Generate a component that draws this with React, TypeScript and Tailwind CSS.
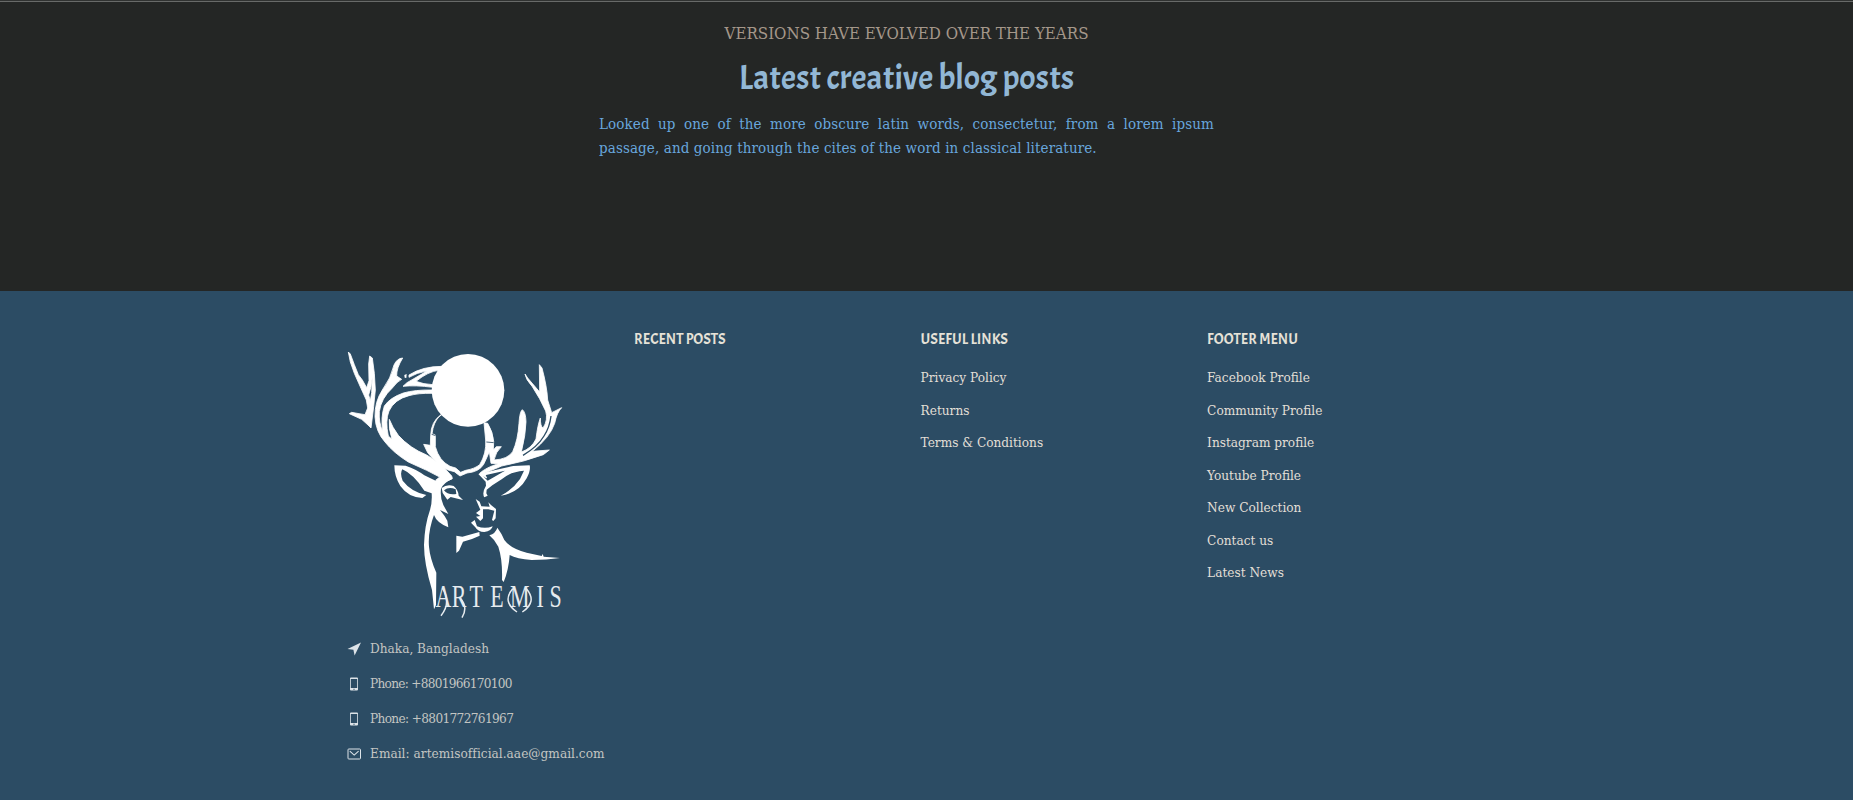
import type { ReactNode } from "react";

const usefulLinks = ["Privacy Policy", "Returns", "Terms & Conditions"];

const footerMenu = [
  "Facebook Profile",
  "Community Profile",
  "Instagram profile",
  "Youtube Profile",
  "New Collection",
  "Contact us",
  "Latest News",
];

function ArtemisLogo() {
  return (
    <svg viewBox="36 30 648 810" className="block h-[270px] w-[216px] overflow-visible" fill="white" role="img" aria-label="Artemis">
      <circle cx="399" cy="151" r="109" />
      <g stroke="white" strokeWidth="2.5" strokeLinejoin="round">
        {/* outer left antler */}
        <path
          fillRule="evenodd"
          d="M40 36 L46 42 L58 74 L70 104 L82 120 L95 143 L102 122 L101 72 L104 48 L112 54 L118 100 L121 150 L116 200 L111 240 L108 264 L99 255 L80 238 L43 221 L50 217 L72 221 L90 224 L98 204 L94 180 L78 145 L58 100 L46 66Z M101 165 L106 182 L110 158 L112 110 L108 140Z"
        />
        {/* main left beam */}
        <path d="M203 54 Q186 55 177 75 Q168 115 142 150 Q119 185 120 230 Q122 275 150 306 Q175 338 220 366 L275 391 L314 411 L302 421 L316 432 L352 416 L350 408 Q318 370 275 345 Q225 325 190 286 Q172 262 163 238 Q160 265 171 298 L160 288 Q150 242 162 213 Q178 178 222 167 Q250 159 291 160 L291 150 Q240 149 205 159 Q165 173 148 198 Q137 232 143 274 Q131 248 133 215 Q138 175 172 144 Q187 124 200 118 L185 108 Q184 85 203 54Z" />
        <path d="M208 105 L215 102 L214 114 L209 113Z" stroke="none" />
        <path d="M222 105 Q262 79 322 79 L312 91 Q280 94 243 124 Q265 133 294 134 L294 142 Q240 135 204 139 L216 128 L276 93 Q245 98 222 112Z" />
        {/* inner tines and the right antler */}
        <path d="M320 224 Q302 235 294 265 L291 281 L301 285 L301 320 Q312 362 345 379 L362 384 L377 397 L392 391 Q420 386 434 374 Q455 340 452 300 L447 248 L458 250 Q474 276 476 304 L475 330 L484 320 L499 320 Q482 336 477 360 Q518 358 533 335 Q549 300 552 250 Q554 215 562 209 Q572 216 573 245 Q572 285 559 336 Q590 325 603 297 Q608 255 616 234 Q616 260 624 264 Q640 240 632 213 Q615 175 592 140 Q572 118 570 102 L578 114 L614 156 L613 74 L621 84 Q636 140 638 180 L650 218 L680 203 Q666 216 659 250 Q645 292 592 334 L643 330 L625 344 Q565 366 500 378 L448 400 L455 414 L438 405 L434 400 Q452 383 490 371 L468 370 L463 335 Q456 352 446 373 Q432 396 396 399 L375 408 L358 395 Q322 388 306 368 L292 354 L278 338 L266 313 L286 316 L287 286 Q288 245 318 224Z" />
      </g>
      <path d="M454 306 L476 308 M290 283 L302 287" stroke="#2c4c64" strokeWidth="2.5" />
      <path d="M564 346 Q608 320 627 288 Q644 262 648 228" stroke="#2c4c64" strokeWidth="4" fill="none" />
      <g transform="translate(150 330)">
        {/* left ear, temple and cheek */}
        <path d="M28 46 L62 47 Q95 58 118 76 L152 92 L202 82 L200 88 Q177 98 168 116 Q165 145 175 165 L190 192 L165 180 Q180 198 187 212 L190 232 Q155 218 147 195 L134 183 Q142 160 140 130 L118 122 Q85 72 52 58 Q44 70 53 92 Q78 125 124 135 L112 144 Q70 142 46 108 Q28 80 28 46Z M134 183 L148 192 Q128 245 132 290 Q135 325 154 368 L153 465 L147 478 L141 420 Q117 340 117 285 Q119 225 134 183Z" />
        {/* eye */}
        <path fillRule="evenodd" d="M170 114 Q185 102 206 108 Q220 120 221 137 L234 150 L212 145 L197 141 L187 149 L173 129Z M177 121 Q188 136 214 132 L212 118 Q192 108 177 121Z" />
        {/* right ear */}
        <path
          fillRule="evenodd"
          d="M280 72 Q320 62 385 48 L434 46 Q438 60 425 85 Q400 130 347 137 Q384 118 405 87 L417 62 Q375 65 350 88 L322 106 L305 119 L304 130 L308 137 L298 142 Q290 128 303 107 L302 95Z M293 77 L308 92 L360 62Z"
        />
        {/* muzzle */}
        <path d="M272 147 L284 155 L289 169 L314 170 L310 157 L318 165 L333 177 L332 205 L325 213 L321 210 L328 182 L310 178 L294 178 L294 205 L286 213 L273 200 L286 198 L273 189 L286 179Z" />
        <path d="M258 218 L269 210 L276 229 Q300 238 323 229 Q320 243 298 246 Q279 246 271 232Z" />
        <path d="M214 257 L232 260 Q262 252 283 246 L284 257 Q262 268 234 275 L222 302 L214 309Z" />
      </g>
      {/* shoulder */}
      <path d="M463 586 Q482 580 487 563 Q500 580 508 600 Q526 625 575 638 L620 648 L623 642 L626 650 L675 654 Q635 660 590 660 Q545 657 524 645 Q521 690 506 726 L501 720 Q503 660 490 620 Q480 600 463 586Z" />
      {/* wordmark with its drawn swashes */}
      <text
        transform="scale(.7 1)"
        x="431 500 576 665 750 864 919"
        y="802"
        fontFamily="Liberation Serif, serif"
        fontSize="94"
        fill="#e6ebef"
      >
        ARTEMIS
      </text>
      <path
        d="M322 744 Q350 788 318 827 M376 775 Q400 802 381 833 M533 746 Q500 785 546 816 M574 746 Q608 785 562 816"
        fill="none"
        stroke="#e6ebef"
        strokeWidth="4.5"
      />
    </svg>
  );
}

function ArrowIcon() {
  return (
    <svg viewBox="0 0 14 14" className="size-3.5 shrink-0" fill="#dde3e8">
      <path d="M14 .5 7.6 13.5 6.4 7.7.5 7Z" />
    </svg>
  );
}

function PhoneIcon() {
  return (
    <svg viewBox="0 0 14 14" className="size-3.5 shrink-0">
      <path
        fill="#dde3e8"
        fillRule="evenodd"
        d="M4 .5h6q1 0 1 1v11q0 1-1 1H4q-1 0-1-1v-11q0-1 1-1ZM3.8 1.9v9h6.4v-9ZM6.4 11.7v1h1.2v-1Z"
      />
    </svg>
  );
}

function MailIcon() {
  return (
    <svg viewBox="0 0 14 14" className="size-3.5 shrink-0" fill="none" stroke="#dde3e8">
      <rect x="1" y="2" width="12.5" height="10" rx=".8" />
      <path d="m2.8 4.2 4.4 3.9 4.4-3.9" strokeWidth="1.1" />
    </svg>
  );
}

function Contact({ icon, children }: { icon: ReactNode; children: ReactNode }) {
  return (
    <li className="flex h-[35px] items-center gap-[9px] text-[13.5px] whitespace-nowrap text-[#c3c5c2]">
      {icon}
      {children}
    </li>
  );
}

function Column({ title, links = [] }: { title: string; links?: string[] }) {
  return (
    <div className="pt-px pl-[0.6px]">
      <h5 className="font-[Acme,'Open_Sans',sans-serif] text-[15px] leading-6 font-semibold text-[#e6e2d8] uppercase">{title}</h5>
      <ul className="mt-[9px]">
        {links.map((label) => (
          <li key={label} className="flex h-[32.5px] items-center text-[13.5px] text-[#e2dfd6]">
            <a href="#">{label}</a>
          </li>
        ))}
      </ul>
    </div>
  );
}

export default function App() {
  return (
    <div className="flex h-[800px] flex-col overflow-hidden bg-[#242625] font-['DejaVu_Serif_Condensed','DejaVu_Serif',serif]">
      <section className="h-[291px] shrink-0 border-t border-[#303231]">
        <div className="h-px bg-[#686a69]" />
        <div className="mx-auto flex w-[615px] -translate-x-[20px] flex-col items-center">
          <p className="mt-[19px] text-[16.8px] leading-6 whitespace-nowrap text-[#a4978a]">VERSIONS HAVE EVOLVED OVER THE YEARS</p>
          <h2 className="mt-[9px] font-[Acme,'Open_Sans',sans-serif] text-[33.75px] leading-[48px] font-semibold text-[#92b7d5]">
            Latest creative blog posts
          </h2>
          <p className="mt-[10px] w-full text-justify text-[15px] leading-6 tracking-[0.11px] text-[#68a6dd]">
            Looked up one of the more obscure latin words, consectetur, from a lorem ipsum passage, and going through the cites of the word in
            classical literature.
          </p>
        </div>
      </section>
      <footer className="flex-1 bg-[#2c4c64]">
        <div className="ml-[347px] grid w-[1146px] grid-cols-4 pt-9">
          <div className="pt-[23px]">
            <ArtemisLogo />
            <ul className="mt-[11px]">
              <Contact icon={<ArrowIcon />}>Dhaka, Bangladesh</Contact>
              <Contact icon={<PhoneIcon />}>
                <span className="tracking-[-0.72px]">Phone: +8801966170100</span>
              </Contact>
              <Contact icon={<PhoneIcon />}>
                <span className="tracking-[-0.65px]">Phone: +8801772761967</span>
              </Contact>
              <Contact icon={<MailIcon />}>
                <span className="tracking-[0.03px]">Email: artemisofficial.aae@gmail.com</span>
              </Contact>
            </ul>
          </div>
          <Column title="Recent Posts" />
          <Column title="Useful Links" links={usefulLinks} />
          <Column title="Footer Menu" links={footerMenu} />
        </div>
      </footer>
    </div>
  );
}
